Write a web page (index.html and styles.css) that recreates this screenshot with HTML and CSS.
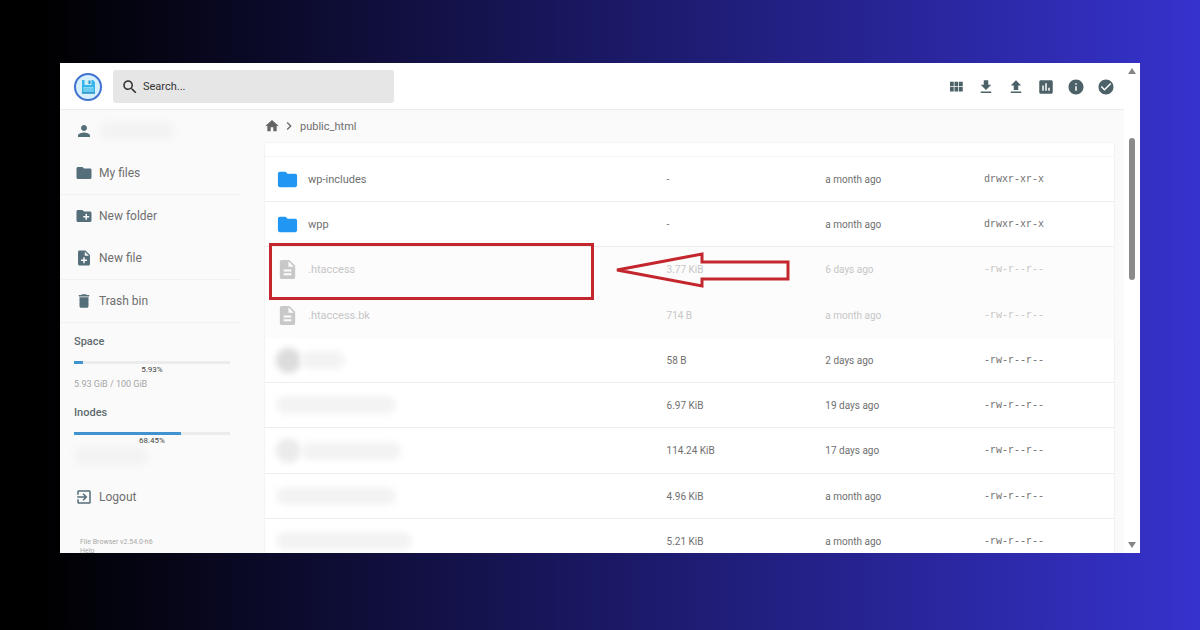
FILE: index.html
```html
<!DOCTYPE html>
<html lang="en">
<head>
  <meta charset="UTF-8">
  <meta name="viewport" content="width=device-width, initial-scale=1.0">
  <title>File Browser</title>
  <link rel="stylesheet" href="styles.css">
</head>
<body>
  <!-- icon set -->
  <svg class="sprite" aria-hidden="true">
    <symbol id="folder" viewBox="0 0 24 24"><path d="M10 4H4c-1.1 0-2 .9-2 2v12c0 1.1.9 2 2 2h16c1.1 0 2-.9 2-2V8c0-1.100-.9-2-2-2h-8l-2-2z"/></symbol>
    <symbol id="file" viewBox="0 0 24 24"><path d="M14 2H6c-1.100 0-2 .9-2 2v16c0 1.100.9 2 2 2h12c1.100 0 2-.9 2-2V8l-6-6zm2 16H8v-2h8v2zm0-4H8v-2h8v2zm-3-5V3.500L18.500 9H13z"/></symbol>
  </svg>

  <div class="window">
    <div class="app">
      <header>
        <svg class="logo" viewBox="0 0 28 28" aria-label="File Browser">
          <circle cx="14" cy="14" r="13" fill="#d5effc" stroke="#3f73cf" stroke-width="2"/>
          <path d="M8 7h11l2 2v11.500H8z" fill="#35b5ea"/>
          <path d="M10.500 7h7v5h-7z" fill="#c9eefc"/>
          <path d="M14.500 7.500h2v3.500h-2z" fill="#2790c9"/>
          <path d="M9.500 14h10v5h-10z" fill="#85d6f5"/>
          <path d="M9.500 16h10M9.500 18h10" stroke="#45b7e5" stroke-width=".7"/>
          <path d="M8 20h13" stroke="#2b7fb5"/>
        </svg>
        <label class="search">
          <svg class="icon" viewBox="0 0 24 24"><path d="M15.500 14h-.79l-.28-.27C15.410 12.590 16 11.110 16 9.500 16 5.910 13.090 3 9.500 3S3 5.910 3 9.500 5.910 16 9.500 16c1.610 0 3.090-.59 4.230-1.570l.27.28v.79l5 4.990L20.490 19l-4.990-5zm-6 0C7.010 14 5 11.990 5 9.500S7.010 5 9.500 5 14 7.010 14 9.500 11.990 14 9.500 14z"/></svg>
          <input type="text" placeholder="Search..." aria-label="Search">
        </label>
        <div class="actions">
          <button aria-label="Switch view"><svg class="icon" viewBox="0 0 24 24"><path d="M4 11h5V5H4v6zm0 7h5v-6H4v6zm6 0h5v-6h-5v6zm6 0h5v-6h-5v6zm-6-7h5V5h-5v6zm6-6v6h5V5h-5z"/></svg></button>
          <button aria-label="Download"><svg class="icon" viewBox="0 0 24 24"><path d="M19 9h-4V3H9v6H5l7 7 7-7zM5 18v2h14v-2H5z"/></svg></button>
          <button aria-label="Upload"><svg class="icon" viewBox="0 0 24 24"><path d="M9 16h6v-6h4l-7-7-7 7h4v6zm-4 2h14v2H5v-2z"/></svg></button>
          <button aria-label="Statistics"><svg class="icon" viewBox="0 0 24 24"><path d="M19 3H5c-1.100 0-2 .9-2 2v14c0 1.100.9 2 2 2h14c1.100 0 2-.9 2-2V5c0-1.100-.9-2-2-2zM9 17H7v-7h2v7zm4 0h-2V7h2v10zm4 0h-2v-4h2v4z"/></svg></button>
          <button aria-label="Info"><svg class="icon" viewBox="0 0 24 24"><path d="M12 2C6.480 2 2 6.480 2 12s4.480 10 10 10 10-4.480 10-10S17.520 2 12 2zm1 15h-2v-6h2v6zm0-8h-2V7h2v2z"/></svg></button>
          <button aria-label="Select multiple"><svg class="icon" viewBox="0 0 24 24"><path d="M12 2C6.480 2 2 6.480 2 12s4.480 10 10 10 10-4.480 10-10S17.520 2 12 2zm-2 15l-5-5 1.410-1.410L10 14.170l7.590-7.590L19 8l-9 9z"/></svg></button>
        </div>
      </header>

      <div class="content">
        <nav class="sidebar">
          <div class="group plain">
            <button class="action">
              <svg class="icon" viewBox="0 0 24 24"><path d="M12 12c2.210 0 4-1.790 4-4s-1.790-4-4-4-4 1.790-4 4 1.790 4 4 4zm0 2c-2.670 0-8 1.340-8 4v2h16v-2c0-2.660-5.330-4-8-4z"/></svg>
              <span class="smudge user"></span>
            </button>
          </div>
          <div class="group">
            <button class="action"><svg class="icon"><use href="#folder"/></svg>My files</button>
          </div>
          <div class="group">
            <button class="action"><svg class="icon" viewBox="0 0 24 24"><path d="M20 6h-8l-2-2H4c-1.110 0-1.990.89-1.990 2L2 18c0 1.110.89 2 2 2h16c1.110 0 2-.89 2-2V8c0-1.110-.89-2-2-2zm-1 8h-3v3h-2v-3h-3v-2h3V9h2v3h3v2z"/></svg>New folder</button>
            <button class="action"><svg class="icon" viewBox="0 0 24 24"><path d="M14 2H6c-1.100 0-2 .9-2 2v16c0 1.100.89 2 2 2h12c1.100 0 2-.9 2-2V8l-6-6zm2 14h-3v3h-2v-3H8v-2h3v-3h2v3h3v2zm-3-7V3.500L18.500 9H13z"/></svg>New file</button>
          </div>
          <div class="group">
            <button class="action"><svg class="icon" viewBox="0 0 24 24"><path d="M6 19c0 1.100.9 2 2 2h8c1.100 0 2-.9 2-2V7H6v12zM19 4h-3.500l-1-1h-5l-1 1H5v2h14V4z"/></svg>Trash bin</button>
          </div>

          <div class="usage">
            <h3>Space</h3>
            <div class="bar"><div class="fill" style="width: 5.93%"></div></div>
            <div class="percent">5.93%</div>
            <div class="detail">5.93 GiB / 100 GiB</div>
          </div>
          <div class="usage">
            <h3>Inodes</h3>
            <div class="bar"><div class="fill" style="width: 68.45%"></div></div>
            <div class="percent">68.45%</div>
            <div class="detail"><span class="smudge inodes"></span></div>
          </div>

          <button class="action logout"><svg class="icon" viewBox="0 0 24 24"><path d="M10.090 15.590L11.500 17l5-5-5-5-1.410 1.410L12.670 11H3v2h9.670l-2.580 2.590zM19 3H5c-1.110 0-2 .9-2 2v4h2V5h14v14H5v-4H3v4c0 1.100.89 2 2 2h14c1.100 0 2-.9 2-2V5c0-1.100-.9-2-2-2z"/></svg>Logout</button>
          <div class="credits">
            <div>File Browser v2.54.0-h6</div>
            <a href="#">Help</a>
          </div>
        </nav>

        <main>
          <div class="breadcrumbs">
            <a href="#" aria-label="Home"><svg class="icon" viewBox="0 0 24 24"><path d="M10 20v-6h4v6h5v-8h3L12 3 2 12h3v8z"/></svg></a>
            <svg class="icon chevron" viewBox="0 0 24 24"><path d="M10 6L8.590 7.410 13.170 12l-4.580 4.590L10 18l6-6z"/></svg>
            <a href="#">public_html</a>
          </div>

          <div class="listing">
            <table>
              <colgroup>
                <col class="col-name">
                <col class="col-size">
                <col class="col-date">
                <col>
              </colgroup>
              <tbody>
                <tr class="cut"><td colspan="4"></td></tr>
                <tr>
                  <td><div class="name"><svg class="type folder"><use href="#folder"/></svg>wp-includes</div></td>
                  <td>-</td><td>a month ago</td><td class="perm">drwxr-xr-x</td>
                </tr>
                <tr>
                  <td><div class="name"><svg class="type folder"><use href="#folder"/></svg>wpp</div></td>
                  <td>-</td><td>a month ago</td><td class="perm">drwxr-xr-x</td>
                </tr>
                <tr class="dot">
                  <td><div class="name"><svg class="type"><use href="#file"/></svg>.htaccess</div></td>
                  <td>3.77 KiB</td><td>6 days ago</td><td class="perm">-rw-r--r--</td>
                </tr>
                <tr class="dot">
                  <td><div class="name"><svg class="type"><use href="#file"/></svg>.htaccess.bk</div></td>
                  <td>714 B</td><td>a month ago</td><td class="perm">-rw-r--r--</td>
                </tr>
                <tr>
                  <td><div class="name hidden"><span class="smudge round"></span><span class="smudge short"></span></div></td>
                  <td>58 B</td><td>2 days ago</td><td class="perm">-rw-r--r--</td>
                </tr>
                <tr>
                  <td><div class="name hidden"><span class="smudge line"></span></div></td>
                  <td>6.97 KiB</td><td>19 days ago</td><td class="perm">-rw-r--r--</td>
                </tr>
                <tr>
                  <td><div class="name hidden"><span class="smudge round light"></span><span class="smudge medium"></span></div></td>
                  <td>114.24 KiB</td><td>17 days ago</td><td class="perm">-rw-r--r--</td>
                </tr>
                <tr>
                  <td><div class="name hidden"><span class="smudge line"></span></div></td>
                  <td>4.96 KiB</td><td>a month ago</td><td class="perm">-rw-r--r--</td>
                </tr>
                <tr>
                  <td><div class="name hidden"><span class="smudge line long"></span></div></td>
                  <td>5.21 KiB</td><td>a month ago</td><td class="perm">-rw-r--r--</td>
                </tr>
              </tbody>
            </table>
            <div class="highlight"></div>
            <svg class="arrow" viewBox="0 0 176 36"><path d="M3 18L88 2v8h86v17H88v7z" fill="none" stroke="#c4262e" stroke-width="3"/></svg>
          </div>
        </main>
      </div>
    </div>

    <div class="scrollbar">
      <svg viewBox="0 0 8 6"><path d="M4 0l4 6H0z"/></svg>
      <div class="track"><div class="thumb"></div></div>
      <svg viewBox="0 0 8 6"><path d="M0 0h8L4 6z"/></svg>
    </div>
  </div>
</body>
</html>
```
FILE: styles.css
```css
* {
  box-sizing: border-box;
}

body {
  margin: 0;
  height: 100vh;
  padding: 63px 60px 77px;
  background: linear-gradient(to right, #000 3%, #3632cd 100%);
  font-family: Roboto, sans-serif;
  font-size: 11px;
  color: #6f6f6f;
  overflow: hidden;
}

button {
  border: none;
  padding: 0;
  background: none;
  font: inherit;
  color: inherit;
  cursor: pointer;
}

a {
  color: inherit;
  text-decoration: none;
}

.sprite {
  display: none;
}

.icon {
  display: block;
  flex: none;
  width: 18px;
  height: 18px;
  fill: #546e7a;
}

.window {
  display: flex;
  height: 100%;
  background: #fff;
  overflow: hidden;
}

.app {
  display: flex;
  flex-direction: column;
  flex: 1;
  min-width: 0;
}

/* header */
header {
  display: flex;
  align-items: center;
  flex: none;
  height: 47px;
  padding: 1px 9px 0 14px;
  border-bottom: 1px solid #ececec;
}

.logo {
  width: 28px;
  height: 28px;
}

.search {
  display: flex;
  align-items: center;
  gap: 4px;
  width: 27%;
  height: 33px;
  margin-left: 11px;
  padding: 0 8px;
  border-radius: 3px;
  background: #e6e6e6;
}

.search .icon {
  fill: #333;
}

.search input {
  flex: 1;
  min-width: 0;
  padding: 0;
  border: none;
  outline: none;
  background: none;
  font: inherit;
}

.search input::placeholder {
  color: #333;
}

.actions {
  display: flex;
  gap: 12px;
  margin-left: auto;
}

.actions .icon {
  fill: #4d6268;
}

.content {
  display: flex;
  flex: 1;
  min-height: 0;
  background: #fafafa;
}

/* sidebar */
.sidebar {
  flex: none;
  width: 180px;
  font-size: 12px;
}

.group {
  border-bottom: 1px solid #f2f2f2;
}

.group.plain {
  border-bottom: none;
}

.action {
  display: flex;
  align-items: center;
  gap: 6px;
  width: 100%;
  height: 42px;
  padding-left: 15px;
}

.usage {
  padding: 11px 10px 0 14px;
}

.usage + .usage {
  padding-top: 13px;
}

.usage h3 {
  margin: 0 0 11px;
  font-size: 11px;
  font-weight: 500;
  line-height: 16px;
  color: #5f6c70;
}

.bar {
  height: 3px;
  background: #ececec;
}

.fill {
  height: 100%;
  background: #4093cf;
}

.percent {
  font-size: 8px;
  line-height: 12px;
  text-align: center;
  color: #444;
}

.detail {
  height: 16px;
  font-size: 9px;
  line-height: 16px;
  color: #a5a5a5;
}

.logout {
  margin-top: 13px;
}

.credits {
  padding: 20px 20px 0;
  font-size: 7px;
  line-height: 9px;
  color: #a8a8a8;
}

/* file list */
main {
  flex: 1;
  min-width: 0;
  padding: 0 9px 0 24px;
}

.breadcrumbs {
  display: flex;
  align-items: center;
  height: 32px;
}

.breadcrumbs .icon {
  width: 16px;
  height: 16px;
  fill: #666;
}

.breadcrumbs .chevron {
  margin: 0 3px 0 1px;
}

.listing {
  position: relative;
}

table {
  width: 100%;
  table-layout: fixed;
  border-spacing: 0;
  background: #fff;
  border: 1px solid #f3f3f3;
  font-size: 10px;
}

.col-name {
  width: 46%;
}

.col-size,
.col-date {
  width: 18.7%;
}

td {
  height: 45px;
  padding: 0 11px;
  border-bottom: 1px solid #ededed;
}

tr:nth-child(4n) td {
  height: 46px;
}

tr.cut td {
  height: 14px;
  border-color: #f5f5f5;
}

.name {
  display: flex;
  align-items: center;
  gap: 9px;
  font-size: 11px;
}

.name.hidden {
  gap: 0;
}

.type {
  width: 23px;
  height: 23px;
  fill: #6f6f6f;
}

.type.folder {
  fill: #2196f3;
}

.perm {
  font-family: "Liberation Mono", monospace;
}

/* dotfiles are dimmed */
.dot td {
  background: #fcfcfc;
  color: #c6c6c6;
  border-color: #fafafa;
}

.dot .type {
  fill: #c8c8c8;
}

/* redacted names */
.smudge {
  display: block;
  height: 18px;
  border-radius: 9px;
  background: #f3f3f3;
  filter: blur(3px);
}

.user {
  width: 76px;
}

.inodes {
  width: 74px;
}

.round {
  width: 25px;
  height: 25px;
  border-radius: 50%;
  background: #dcdcdc;
}

.round.light {
  background: #ebebeb;
}

.short {
  width: 44px;
}

.medium {
  width: 100px;
}

.line {
  width: 120px;
}

.line.long {
  width: 136px;
}

/* callout over the .htaccess row */
.highlight {
  position: absolute;
  top: 101px;
  left: 5px;
  width: 325px;
  height: 57px;
  border: 3px solid #c4262e;
}

.arrow {
  position: absolute;
  top: 110px;
  left: 350px;
  width: 176px;
  height: 36px;
}

.scrollbar {
  display: flex;
  flex-direction: column;
  align-items: center;
  width: 16px;
  padding: 5px 0;
}

.scrollbar svg {
  width: 8px;
  height: 6px;
  fill: #858585;
}

.track {
  flex: 1;
  padding-top: 64px;
}

.thumb {
  width: 6px;
  height: 30%;
  min-height: 142px;
  border-radius: 3px;
  background: #8a8a8a;
}
```
